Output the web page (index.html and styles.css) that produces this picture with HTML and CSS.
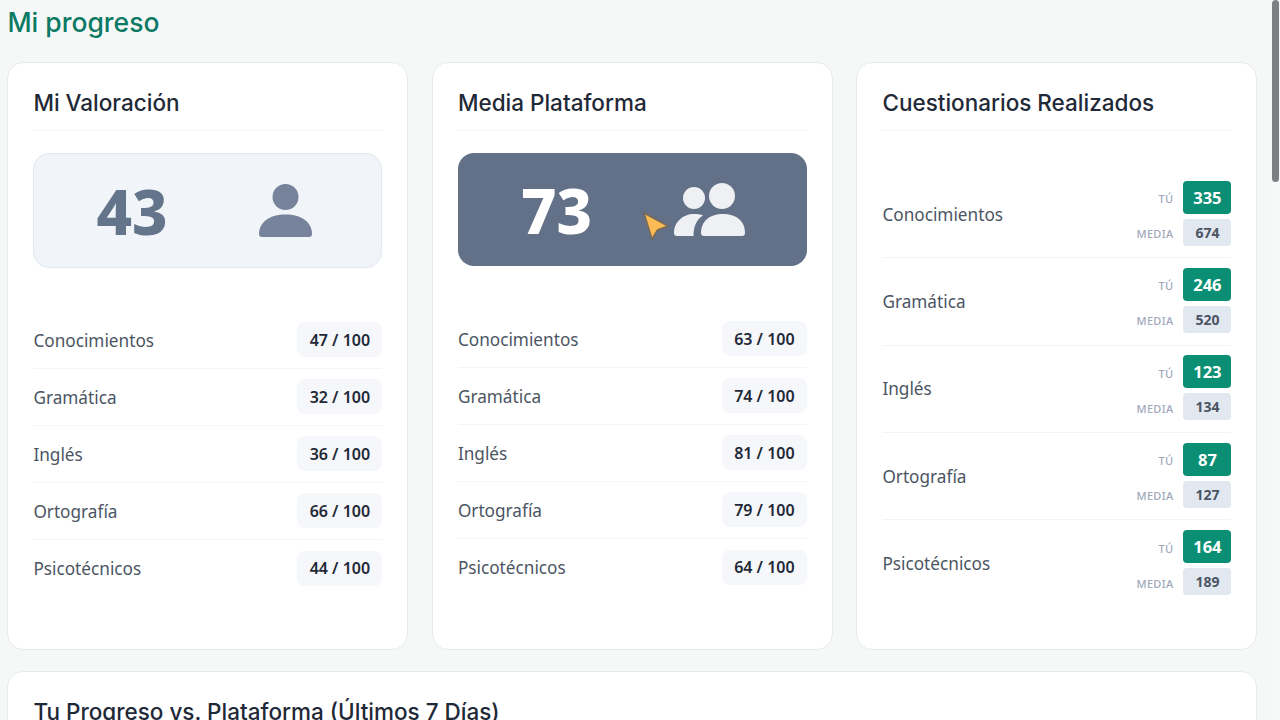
FILE: index.html
```html
<!DOCTYPE html>
<html lang="es">
<head>
  <meta charset="UTF-8">
  <title>Mi progreso</title>
  <link rel="stylesheet" href="styles.css">
</head>
<body>

  <main class="page">
    <h1 class="page-title">Mi progreso</h1>

    <div class="cards">
      <section class="card">
        <h2 class="card-title">Mi Valoración</h2>
        <div class="hero hero-light">
          <span class="hero-num">43</span>
          <svg class="hero-icon" width="54" height="54" viewBox="0 0 54 54">
            <circle cx="26.5" cy="13" r="13"/>
            <path d="M0 50C0 38 11 30.500 26.500 30.500S53 38 53 50C53 52 52 53 50 53H3C1 53 0 52 0 50Z"/>
          </svg>
        </div>
        <ul class="scores">
          <li class="score"><span class="label">Conocimientos</span><span class="pill">47 / 100</span></li>
          <li class="score"><span class="label">Gramática</span><span class="pill">32 / 100</span></li>
          <li class="score"><span class="label">Inglés</span><span class="pill">36 / 100</span></li>
          <li class="score"><span class="label">Ortografía</span><span class="pill">66 / 100</span></li>
          <li class="score"><span class="label">Psicotécnicos</span><span class="pill">44 / 100</span></li>
        </ul>
      </section>

      <section class="card">
        <h2 class="card-title">Media Plataforma</h2>
        <div class="hero hero-dark">
          <span class="hero-num">73</span>
          <svg class="hero-icon" width="72" height="54" viewBox="0 0 72 54">
            <circle cx="20" cy="15" r="11"/>
            <circle cx="48" cy="13" r="13"/>
            <path d="M0 50C0 39 9 31 20 31C24 31 27 31.500 29 32.500C23 36 19.500 43 19.500 53H3C1 53 0 52 0 50Z"/>
            <path d="M27 50C27 38 36 31 49 31S71 38 71 50C71 52 70 53 68 53H30C28 53 27 52 27 50Z"/>
          </svg>
        </div>
        <ul class="scores">
          <li class="score"><span class="label">Conocimientos</span><span class="pill">63 / 100</span></li>
          <li class="score"><span class="label">Gramática</span><span class="pill">74 / 100</span></li>
          <li class="score"><span class="label">Inglés</span><span class="pill">81 / 100</span></li>
          <li class="score"><span class="label">Ortografía</span><span class="pill">79 / 100</span></li>
          <li class="score"><span class="label">Psicotécnicos</span><span class="pill">64 / 100</span></li>
        </ul>
      </section>

      <section class="card">
        <h2 class="card-title">Cuestionarios Realizados</h2>
        <ul class="counts">
          <li class="count">
            <span class="label">Conocimientos</span>
            <div class="count-grid">
              <span class="who">TÚ</span><span class="badge badge-you">335</span>
              <span class="who">MEDIA</span><span class="badge badge-avg">674</span>
            </div>
          </li>
          <li class="count">
            <span class="label">Gramática</span>
            <div class="count-grid">
              <span class="who">TÚ</span><span class="badge badge-you">246</span>
              <span class="who">MEDIA</span><span class="badge badge-avg">520</span>
            </div>
          </li>
          <li class="count">
            <span class="label">Inglés</span>
            <div class="count-grid">
              <span class="who">TÚ</span><span class="badge badge-you">123</span>
              <span class="who">MEDIA</span><span class="badge badge-avg">134</span>
            </div>
          </li>
          <li class="count">
            <span class="label">Ortografía</span>
            <div class="count-grid">
              <span class="who">TÚ</span><span class="badge badge-you">87</span>
              <span class="who">MEDIA</span><span class="badge badge-avg">127</span>
            </div>
          </li>
          <li class="count">
            <span class="label">Psicotécnicos</span>
            <div class="count-grid">
              <span class="who">TÚ</span><span class="badge badge-you">164</span>
              <span class="who">MEDIA</span><span class="badge badge-avg">189</span>
            </div>
          </li>
        </ul>
      </section>
    </div>

    <section class="card card-wide">
      <h2 class="card-title">Tu Progreso vs. Plataforma (Últimos 7 Días)</h2>
    </section>
  </main>

  <!-- puntero del raton -->
  <svg class="cursor" width="28" height="30" viewBox="0 0 28 30">
    <path d="M2 2L26 15L15.500 19L10 28Z" fill="#fbbb55" stroke="#7a6a55" stroke-width="1.500" stroke-linejoin="round"/>
  </svg>

  <div class="scrollbar"><div class="scrollbar-thumb"></div></div>

</body>
</html>
```

FILE: styles.css
```css
* {
  box-sizing: border-box;
}

html, body {
  height: 100%;
}

body {
  margin: 0;
  overflow: hidden;
  background: #f6f8f7;
  font-family: 'Noto Sans', sans-serif;
  color: #1f2937;
}

ul {
  list-style: none;
  margin: 0;
  padding: 0;
}

.page {
  width: 1270px;
  padding: 5px 12.600px 0 7.400px;
}

.page-title {
  margin: 0 0 23px;
  font-family: 'Inter', sans-serif;
  font-size: 26.500px;
  line-height: 34px;
  font-weight: 500;
  color: #0a7a64;
}

.cards {
  display: grid;
  grid-template-columns: repeat(3, 1fr);
  gap: 23.500px;
}

.card {
  height: 588px;
  padding: 26px 25px 0;
  background: #fff;
  border: 1px solid #e6ebea;
  border-radius: 16px;
}

.card-wide {
  margin-top: 21px;
}

.card-title {
  margin: 0;
  padding-bottom: 14px;
  border-bottom: 1px solid #f3f5f6;
  font-family: 'Inter', sans-serif;
  font-size: 22.500px;
  line-height: 27px;
  font-weight: 500;
  color: #1f2937;
}

.hero {
  display: flex;
  align-items: center;
  margin-top: 22px;
  border-radius: 16px;
}

.hero-light {
  height: 115px;
  gap: 91px;
  padding-left: 62px;
  background: #f1f4f8;
  border: 1px solid #e2e8f0;
  color: #64748b;
}

.hero-light .hero-icon {
  fill: #76839b;
}

.hero-dark {
  height: 113px;
  gap: 82px;
  padding-left: 63px;
  background: #627088;
  color: #fff;
}

.hero-dark .hero-icon {
  fill: #eef0f4;
}

.hero-num {
  margin-top: 2px;
  font-size: 61.500px;
  line-height: 1;
  font-weight: 800;
}

.scores {
  margin-top: 44px;
}

.hero-dark + .scores {
  margin-top: 45px;
}

.score {
  display: flex;
  justify-content: space-between;
  align-items: center;
  height: 57px;
  border-bottom: 1px solid #f3f5f6;
}

.score:last-child {
  border-bottom: none;
}

.label {
  font-size: 17.200px;
  color: #4b5563;
}

.pill {
  display: flex;
  align-items: center;
  justify-content: center;
  width: 85px;
  height: 35px;
  margin-top: -1px;
  background: #f5f7fa;
  border-radius: 8px;
  font-size: 16px;
  font-weight: 600;
  color: #1f2937;
}

.counts {
  margin-top: 40px;
}

.count {
  display: flex;
  justify-content: space-between;
  align-items: center;
  height: 87.300px;
  padding-bottom: 2px;
  border-bottom: 1px solid #f1f3f5;
}

.count .label {
  padding-top: 2px;
}

.count:last-child {
  border-bottom: none;
}

.count-grid {
  display: grid;
  grid-template-columns: auto 48px;
  align-items: center;
  justify-items: end;
  gap: 5px 10px;
}

.who {
  padding-top: 3px;
  font-size: 11px;
  font-weight: 500;
  letter-spacing: 0.3px;
  color: #a0a8ba;
}

.badge {
  display: flex;
  align-items: center;
  justify-content: center;
  width: 48px;
  border-radius: 4px;
  font-weight: 700;
}

.badge-you {
  height: 33px;
  background: #0b8f74;
  color: #fff;
  font-size: 16.500px;
}

.badge-avg {
  height: 27px;
  background: #e2e8f0;
  color: #4b5563;
  font-size: 14px;
}

.cursor {
  position: absolute;
  left: 642px;
  top: 211px;
}

.scrollbar {
  position: absolute;
  top: 0;
  right: 0;
  width: 10px;
  height: 100%;
  background: #f7f8f8;
}

.scrollbar-thumb {
  width: 7px;
  height: 182px;
  margin-left: 2px;
  background: #7d7f82;
  border-radius: 4px;
}
```
